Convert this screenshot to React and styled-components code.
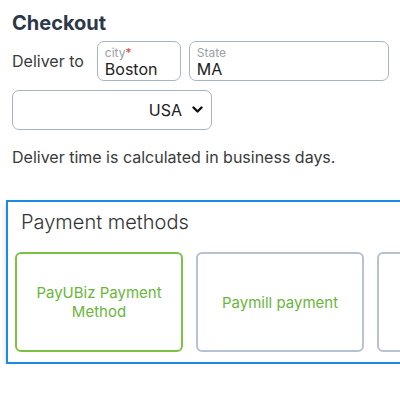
import React from 'react';
import styled, { createGlobalStyle } from 'styled-components';

const GlobalStyle = createGlobalStyle`
  body {
    margin: 0;
    background: #fff;
    font-family: Inter, "Noto Sans", sans-serif;
    overflow: hidden;
  }
`;

const Page = styled.div`
  padding: 10px 0 0 12px;
  width: 620px;
`;

const Title = styled.h1`
  margin: 0 0 5px;
  font-size: 20px;
  line-height: 26px;
  font-weight: 700;
  color: #2d3748;
`;

const Row = styled.div`
  display: flex;
  align-items: center;
  gap: 8px;
`;

const RowLabel = styled.span`
  font-size: 16px;
  color: #3a3a3a;
  margin-right: 5px;
`;

const Field = styled.div`
  display: flex;
  flex-direction: column;
  justify-content: center;
  box-sizing: border-box;
  width: ${(p) => p.width}px;
  height: 40px;
  padding: 0 7px;
  border: 1px solid #a9b4c2;
  border-radius: 7px;
`;

const FieldLabel = styled.span`
  font-size: 12px;
  line-height: 15px;
  color: #9aa0a8;
`;

const Star = styled.span`
  color: #e53e3e;
`;

const FieldValue = styled.span`
  font-size: 16px;
  line-height: 18px;
  color: #222;
`;

const Select = styled.div`
  display: flex;
  align-items: center;
  justify-content: flex-end;
  gap: 10px;
  box-sizing: border-box;
  width: 200px;
  height: 40px;
  margin-top: 9px;
  padding: 0 8px;
  border: 1px solid #a9b4c2;
  border-radius: 7px;
  font-size: 16px;
  color: #222;
`;

const Note = styled.p`
  margin: 17px 0 0;
  font-size: 16px;
  line-height: 20px;
  color: #3a3a3a;
`;

const Methods = styled.div`
  margin: 33px 0 0 -6px;
  border: 2px solid #1a8ae6;
  padding: 8px 0 10px 7px;
  box-shadow: 0 4px 6px rgba(0, 0, 0, 0.15);
`;

const MethodsTitle = styled.div`
  font-size: 20px;
  line-height: 24px;
  font-weight: 300;
  color: #333;
  margin: 0 0 18px 6px;
`;

const Cards = styled.div`
  display: flex;
  gap: 13px;
`;

const Card = styled.div`
  display: flex;
  align-items: center;
  justify-content: center;
  text-align: center;
  box-sizing: border-box;
  width: 168px;
  height: 100px;
  flex-shrink: 0;
  padding: 0 12px;
  border: 2px solid ${(p) => (p.active ? '#7cc242' : '#b6c2d1')};
  border-radius: 6px;
  font-size: 15px;
  line-height: 19px;
  color: #6ab63c;
`;

const Chevron = () => (
  <svg width="11" height="8" viewBox="0 0 11 8">
    <path d="M1.5 1.5l4 4 4-4" fill="none" stroke="#111" strokeWidth="2.4" strokeLinecap="round" strokeLinejoin="round" />
  </svg>
);

const App = () => {
  return (
    <Page>
      <GlobalStyle />
      <Title>Checkout</Title>
      <Row>
        <RowLabel>Deliver to</RowLabel>
        <Field width={84}>
          <FieldLabel>city<Star>*</Star></FieldLabel>
          <FieldValue>Boston</FieldValue>
        </Field>
        <Field width={200}>
          <FieldLabel>State</FieldLabel>
          <FieldValue>MA</FieldValue>
        </Field>
      </Row>
      <Select>
        USA <Chevron />
      </Select>
      <Note>Deliver time is calculated in business days.</Note>
      <Methods>
        <MethodsTitle>Payment methods</MethodsTitle>
        <Cards>
          <Card active>PayUBiz Payment Method</Card>
          <Card>Paymill payment</Card>
          <Card />
        </Cards>
      </Methods>
    </Page>
  );
};

export default App;
